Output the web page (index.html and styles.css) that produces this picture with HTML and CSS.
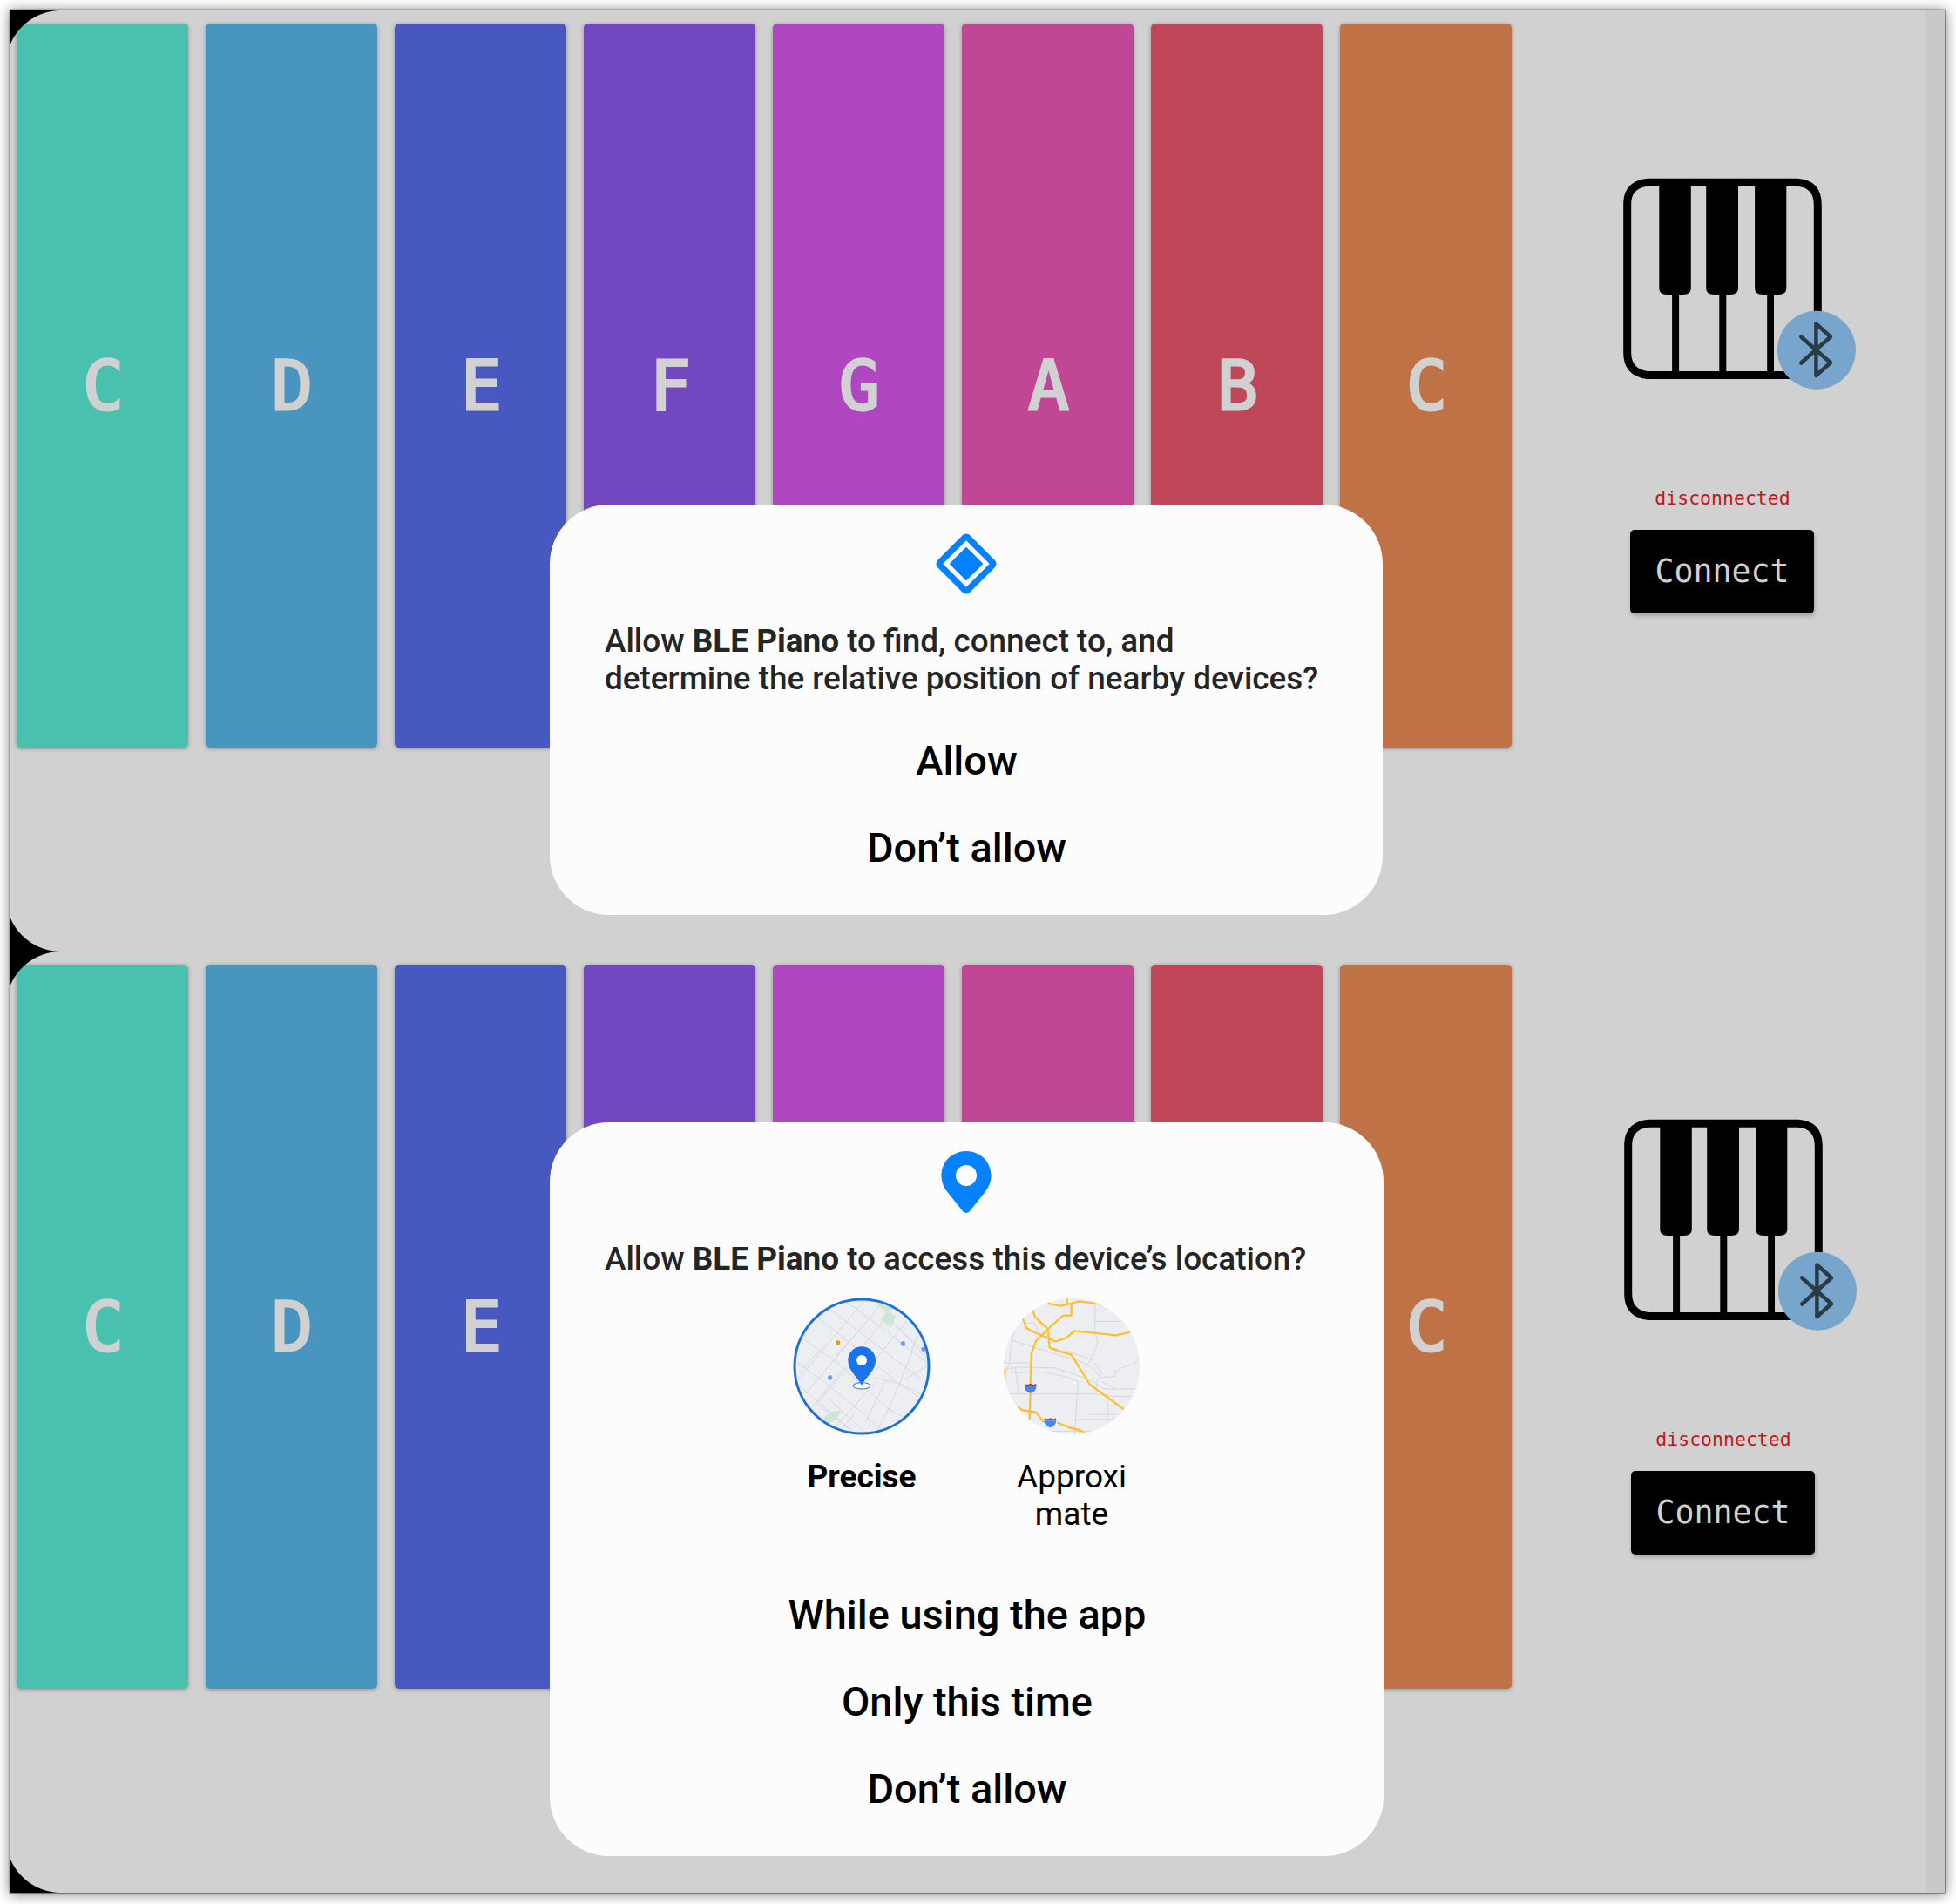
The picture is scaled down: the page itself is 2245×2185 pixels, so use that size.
FILE: index.html
```html
<!DOCTYPE html>
<html lang="en">
<head>
<meta charset="utf-8">
<title>BLE Piano permissions</title>
<link rel="stylesheet" href="styles.css">
</head>
<body>
<svg class="defs" width="0" height="0">
  <symbol id="piano" viewBox="0 0 270 250">
    <path d="M29 5.300H200Q223.300 7 223.300 31V200Q223.300 226.400 200 226.400H27Q4.700 223 4.700 201V28Q6 7 29 5.300Z" fill="none" stroke="#000" stroke-width="9"/>
    <path d="M41.300 5H77.800V127Q77.800 134 69 134H50Q41.300 134 41.300 127ZM95.200 5H132V127Q132 134 123 134H104Q95.200 134 95.200 127ZM151.100 5H187.300V127Q187.300 134 178.500 134H160Q151.100 134 151.100 127ZM56.100 133H64.100V226H56.100ZM110.300 133H118.300V226H110.300ZM165.200 133H173V226H165.200Z"/>
    <circle cx="222" cy="197.700" r="45" fill="#77a5cc"/>
    <path d="M204.200 182.500L238 212.200L221.400 227V167.500L238 182.500L204.200 212.500" fill="none" stroke="#293c45" stroke-width="4.500" stroke-linecap="round" stroke-linejoin="round"/>
  </symbol>
</svg>
<main class="sheet">
  <section class="screen">
    <div class="keys">
      <div class="key c1">C</div><div class="key d">D</div><div class="key e">E</div><div class="key f">F</div><div class="key g">G</div><div class="key a">A</div><div class="key b">B</div><div class="key c2">C</div>
    </div>
    <aside class="side">
      <svg class="piano"><use href="#piano"/></svg>
      <p class="status">disconnected</p>
      <button class="connect">Connect</button>
    </aside>
    <i class="strip"></i>
    <i class="corner top"></i><i class="corner bottom"></i>
    <div class="dialog nearby">
      <svg class="ico" width="72" height="72" viewBox="0 0 72 72"><g transform="rotate(45 36 36)"><rect x="9.850" y="9.850" width="52.300" height="52.300" rx="6" fill="#0381fe"/><rect x="17.100" y="17.100" width="37.800" height="37.800" fill="#fcfcfc"/><rect x="22.300" y="22.300" width="27.400" height="27.400" rx="1" fill="#0381fe"/></g></svg>
      <p class="question">Allow <b>BLE Piano</b> to find, connect to, and<br>determine the relative position of nearby devices?</p>
      <div class="choices"><span>Allow</span><span>Don’t allow</span></div>
    </div>
  </section>
  <section class="screen">
    <div class="keys">
      <div class="key c1">C</div><div class="key d">D</div><div class="key e">E</div><div class="key f"></div><div class="key g"></div><div class="key a"></div><div class="key b"></div><div class="key c2">C</div>
    </div>
    <aside class="side shifted">
      <svg class="piano"><use href="#piano"/></svg>
      <p class="status">disconnected</p>
      <button class="connect">Connect</button>
    </aside>
    <i class="strip narrow"></i>
    <i class="corner top"></i><i class="corner bottom"></i>
    <div class="dialog location">
      <svg class="ico" width="72" height="72" viewBox="0 0 72 72"><path d="M36 1C20 1 7.500 13 7.500 29C7.500 37 10.500 43 14.500 48L32 70Q36 74 40 70L57.500 48C61.500 43 64.500 37 64.500 29C64.500 13 52 1 36 1Z" fill="#0381fe"/><circle cx="36" cy="29" r="12" fill="#fcfcfc"/></svg>
      <p class="question">Allow <b>BLE Piano</b> to access this device’s location?</p>
      <div class="maps">
        <figure class="option">
          <svg width="158" height="158" viewBox="0 0 474 474">
            <defs><clipPath id="m1"><circle cx="237" cy="237" r="232"/></clipPath></defs>
            <g clip-path="url(#m1)">
              <path d="M0 0H474V474H0Z" fill="#eceef2"/>
              <path d="M285 20L355 25L330 48L355 65L338 102L302 78L320 50Z" fill="#cee7d4"/>
              <path d="M105 412L142 390H167L150 418L120 438Z" fill="#cee7d4"/>
              <g fill="none" stroke="#d5d7dc" stroke-width="3">
                <path d="M75 60L230 184L360 293L474 370M115 30L250 135L440 280M165 0L300 100L474 235M40 145L160 230L330 385L440 440M10 220L120 300L230 390L330 474M0 285L200 455M340 85L474 205M360 100L474 225M280 275L370 297L474 350M125 350L260 474M90 370L220 474"/>
                <path d="M255 0L20 280M315 10L45 330M350 35L65 380M405 65L270 232M440 90L400 215L330 385L280 474M320 285L250 430M474 230L380 285M180 405L150 440M215 395L165 455M240 100L150 200M115 160L20 260M190 240L80 370M285 290L180 410"/>
              </g>
              <g fill="#6d9eeb"><circle cx="379" cy="159" r="8"/><circle cx="450" cy="178" r="8"/><circle cx="128" cy="276" r="8"/></g><circle cx="155" cy="156" r="8" fill="#f29900"/>
            </g>
            <ellipse cx="237" cy="304" rx="30" ry="11" fill="#fff" stroke="#1a73e8" stroke-width="3"/>
            <path d="M237 169C211 169 190 189 190 216C190 252 218 267 237 302C256 267 285 252 285 216C285 189 263 169 237 169Z" fill="#1a73e8"/><circle cx="237" cy="216" r="18" fill="#fff"/>
            <circle cx="237" cy="237" r="231" fill="none" stroke="#1a6fdb" stroke-width="9"/>
          </svg>
          <figcaption class="chosen">Precise</figcaption>
        </figure>
        <figure class="option">
          <svg width="158" height="158" viewBox="0 0 474 474">
            <defs><clipPath id="m2"><circle cx="237" cy="237" r="234"/></clipPath></defs>
            <g clip-path="url(#m2)">
              <path d="M0 0H474V474H0Z" fill="#eceef2"/>
              <g transform="translate(-3 0)">
                <g fill="none" stroke="#d5d7dc" stroke-width="3">
                  <path d="M320 20V125L330 150L318 190L280 260M320 82H420M320 46H350L370 25M80 88H112L120 105L135 135M40 120L25 230L15 250M35 148L170 190L270 220L310 240L340 275L390 272V255L420 238L455 230L474 205M0 225H97M0 250L50 240L180 242L240 260L320 292L350 315H480M30 260L140 256L230 275L262 290L258 350L250 474M325 310V290L345 262L310 215L240 190L180 175M45 240L58 332M0 332H320L380 340H480M365 335V430M383 340V420M300 402H480M255 420H440M170 460H340M345 290L390 315"/>
                </g>
                <g fill="none" stroke="#fbc22d" stroke-width="7" stroke-linejoin="round">
                  <path d="M150 10L165 22L205 29L267 13L350 23M224 0V22M239 24V62H211L158 109L136 130L117 150L101 194L98 300M98 325L95 430M106 40L113 66L158 109L164 172L195 185L239 197L303 300L420 385M60 70L74 76L84 105L105 117L140 132L186 151L221 139L249 115L392 130L445 118M50 375L70 387L118 396L145 430M190 430L230 447L274 459L300 480M10 250V280"/>
                </g>
                <g id="shield"><path d="M77 305H119Q118 322 98 329Q78 322 77 305Z" fill="#4285f4"/><path d="M78 303V296L82 299L91 299L98 296L105 299L113 299L118 296V303Z" fill="#c5372c"/></g>
                <use href="#shield" x="68" y="119"/>
              </g>
            </g>
          </svg>
          <figcaption>Approxi<br>mate</figcaption>
        </figure>
      </div>
      <div class="choices"><span>While using the app</span><span>Only this time</span><span>Don’t allow</span></div>
    </div>
  </section>
</main>
</body>
</html>
```
FILE: styles.css
```css
* { box-sizing: border-box; }
body { margin: 0; padding: 12px; width: 2245px; height: 2185px; background: #fff; font-family: Roboto, sans-serif; overflow: hidden; }
p, figure { margin: 0; }
.defs { position: absolute; }
.sheet { width: 2220px; height: 2160px; box-shadow: 0 0 2px 1px rgba(0,0,0,.5), 0 1px 14px 1px rgba(0,0,0,.48); }
.screen { position: relative; display: flex; width: 2220px; height: 1080px; background: #d1d1d1; padding: 15px 0 0 7px; overflow: hidden; }
.keys { display: flex; gap: 20px; height: 831px; }
.key { width: 197px; padding: 1px 0 0 2px; display: flex; align-items: center; justify-content: center; border-radius: 5px; box-shadow: 0 1px 5px rgba(0,0,0,.3); color: #d1d1d1; font: 78px/1 "DejaVu Sans Mono", monospace; -webkit-text-stroke: 3px #d1d1d1; }
.c1 { background: #4ac0af; }
.d { background: #4896c0; }
.e { background: #4758c0; }
.f { background: #7347bf; }
.g { background: #ae47c0; }
.a { background: #c04794; }
.b { background: #c04758; }
.c2 { background: #be7245; }
.side { width: 270px; margin-left: 128px; padding-top: 177px; }
.side.shifted { margin-left: 129px; }
.piano { display: block; width: 270px; height: 250px; }
.status { width: 228px; margin-top: 102px; text-align: center; color: #c4161c; font: 21.500px/32px "DejaVu Sans Mono", monospace; }
.connect { display: block; width: 211px; height: 96px; margin: 20px 0 0 8px; padding: 0; border: 0; border-radius: 5px; background: #000; color: #d1d1d1; font: 36.500px/96px "DejaVu Sans Mono", monospace; box-shadow: 1px 3px 5px rgba(0,0,0,.22); }
.strip { position: absolute; right: 0; top: 0; width: 23px; height: 100%; background: #c9c9c9; }
.strip.narrow { width: 22px; }
.corner { position: absolute; left: 0; width: 58px; height: 63px; }
.corner.top { top: 0; background: radial-gradient(circle at 58px 63px, transparent 62.500px, #000 63.500px); }
.corner.bottom { bottom: 0; background: radial-gradient(circle at 58px 0, transparent 62.500px, #000 63.500px); }
.dialog { position: absolute; left: 619px; width: 956px; border-radius: 68px; background: #fcfcfc; display: flex; flex-direction: column; padding: 32px 63px 0; }
.nearby { top: 567px; height: 471px; }
.location { top: 196px; height: 842px; width: 957px; }
.ico { align-self: center; flex: none; margin-right: 1px; overflow: visible; }
.question { margin-top: 31px; color: #252525; font-size: 36.900px; line-height: 43px; font-weight: 500; white-space: nowrap; }
.question b { font-weight: 700; }
.choices { display: flex; flex-direction: column; align-items: center; margin-top: 23px; padding-left: 1px; font-size: 46.900px; line-height: 100px; font-weight: 500; color: #000; white-space: nowrap; }
.maps { display: flex; justify-content: center; gap: 83px; margin-top: 23px; }
.option { width: 158px; display: flex; flex-direction: column; align-items: center; }
.option svg { flex: none; }
.option figcaption { margin-top: 26px; font-size: 37px; line-height: 43px; text-align: center; color: #000; }
.option .chosen { font-weight: 700; }
.location .choices { margin-top: 44px; }
```
